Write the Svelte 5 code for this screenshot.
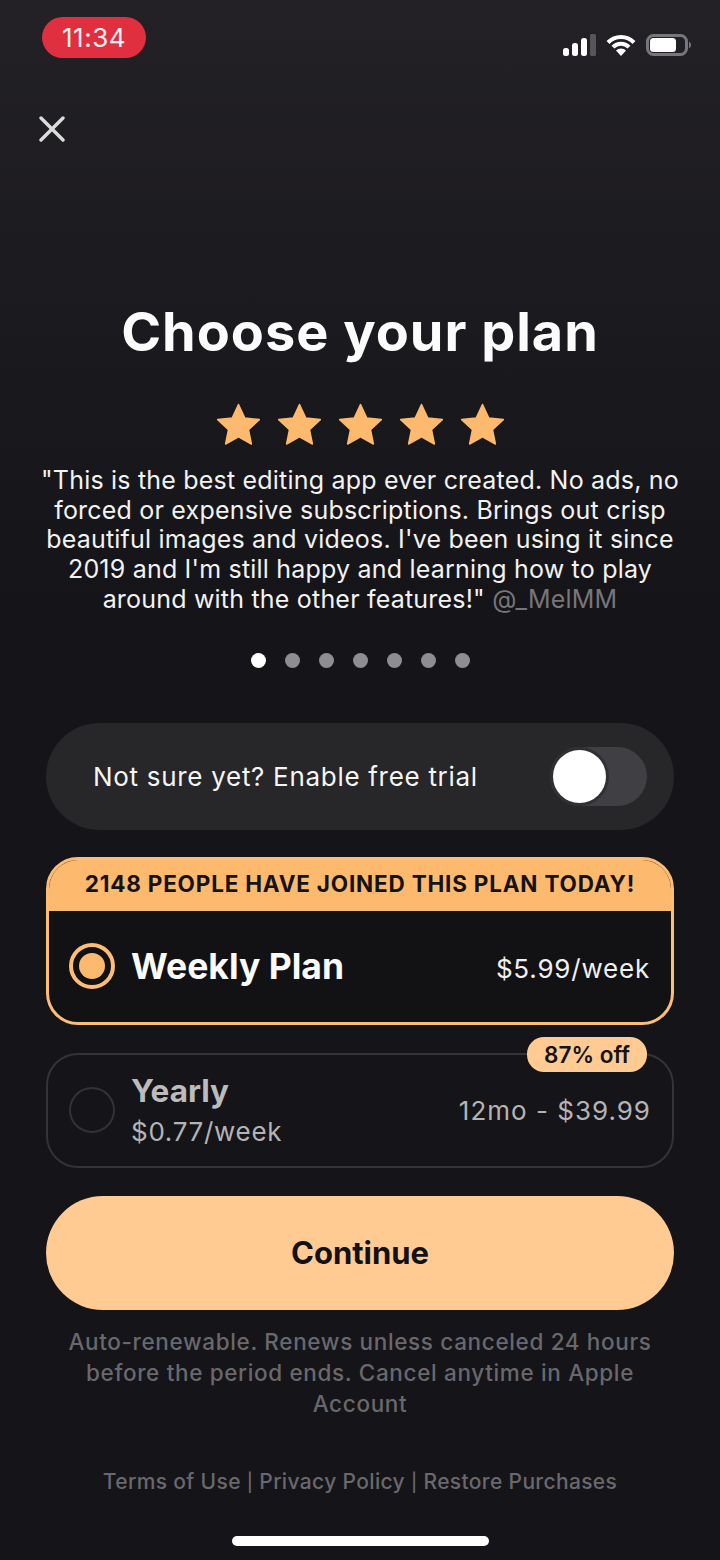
<script lang="ts">
const dots = [0, 1, 2, 3, 4, 5, 6];
const stars = [0, 1, 2, 3, 4];
</script>

<div class="screen">
  <div class="status">
    <span class="time">11:34</span>
    <div class="status-icons">
      <svg width="33" height="22" viewBox="0 0 33 22">
        <rect x="0" y="14" width="6" height="8" rx="2.5" fill="#fff" />
        <rect x="9" y="9" width="6" height="13" rx="2.5" fill="#fff" />
        <rect x="18" y="4" width="6" height="18" rx="2.5" fill="#fff" />
        <rect x="27" y="0" width="6" height="22" rx="1.5" fill="#56555a" />
      </svg>
      <svg width="30" height="22" viewBox="0 0 30 22">
        <path d="M2 8.5a18 18 0 0 1 26 0M7 13.2a11 11 0 0 1 16 0" fill="none" stroke="#fff" stroke-width="4" />
        <path d="M15 22l-5-5.5a7 7 0 0 1 10 0z" fill="#fff" />
      </svg>
      <svg width="47" height="22" viewBox="0 0 47 22">
        <rect x="1.5" y="1.5" width="39" height="19" rx="6" fill="none" stroke="#77767a" stroke-width="3" />
        <rect x="4" y="4" width="26" height="14" rx="3.5" fill="#fff" />
        <path d="M43 7.5a4 4 0 0 1 0 7z" fill="#77767a" />
      </svg>
    </div>
  </div>

  <svg class="close" width="26" height="26" viewBox="0 0 26 26">
    <path d="M2 2l22 22M24 2L2 24" stroke="#dcdcdc" stroke-width="3.4" stroke-linecap="round" />
  </svg>

  <h1>Choose your plan</h1>

  <div class="stars">
    {#each stars as s}
      <svg width="45" height="43" viewBox="0 0 45 43">
        <path d="M22.5 1.5l6.2 13.4 14.6 1.7-10.8 10 2.9 14.4-12.9-7.2-12.9 7.2 2.9-14.4-10.8-10 14.6-1.7z" fill="#fdba6f" stroke="#fdba6f" stroke-width="1.5" stroke-linejoin="round" />
      </svg>
    {/each}
  </div>

  <p class="quote">"This is the best editing app ever created. No ads, no forced or expensive subscriptions. Brings out crisp beautiful images and videos. I've been using it since 2019 and I'm still happy and learning how to play around with the other features!" <span class="handle">@_MelMM</span></p>

  <div class="dots">
    {#each dots as d}
      <span class="dot" class:active={d === 0}></span>
    {/each}
  </div>

  <div class="trial">
    <span>Not sure yet? Enable free trial</span>
    <div class="toggle"><div class="knob"></div></div>
  </div>

  <div class="plan selected">
    <div class="plan-banner">2148 PEOPLE HAVE JOINED THIS PLAN TODAY!</div>
    <div class="plan-row">
      <div class="radio on"><div class="radio-fill"></div></div>
      <span class="plan-name">Weekly Plan</span>
      <span class="plan-price">$5.99/week</span>
    </div>
  </div>

  <div class="plan other">
    <span class="badge">87% off</span>
    <div class="plan-row">
      <div class="radio"></div>
      <div class="plan-text">
        <span class="plan-name small">Yearly</span>
        <span class="plan-sub">$0.77/week</span>
      </div>
      <span class="plan-price dim">12mo - $39.99</span>
    </div>
  </div>

  <button class="continue">Continue</button>

  <p class="legal">Auto-renewable. Renews unless canceled 24 hours before the period ends. Cancel anytime in Apple Account</p>

  <p class="links">Terms of Use <span class="sep">|</span> Privacy Policy <span class="sep">|</span> Restore Purchases</p>

  <div class="home"></div>
</div>

<style>
  :global(body) {
    margin: 0;
    background: #151418;
  }

  .screen {
    width: 720px;
    height: 1560px;
    box-sizing: border-box;
    padding: 17px 46px 0;
    display: flex;
    flex-direction: column;
    overflow: hidden;
    background: linear-gradient(#232125 0, #1c1b1f 260px, #151418 600px, #151418 100%);
    font-family: Inter, "Liberation Sans", sans-serif;
    color: #fff;
  }

  .status {
    display: flex;
    justify-content: space-between;
    align-items: flex-start;
    margin: 0 -19px 0 -4px;
    height: 41px;
  }

  .time {
    width: 104px;
    height: 41px;
    border-radius: 21px;
    background: #e02f3f;
    color: #fdf0f0;
    font-size: 26px;
    font-weight: 400;
    line-height: 41px;
    text-align: center;
    letter-spacing: 0.5px;
  }

  .status-icons {
    display: flex;
    align-items: center;
    gap: 10px;
    margin-top: 17px;
  }

  .close {
    margin: 58px 0 0 -7px;
    flex: none;
  }

  h1 {
    margin: 160px 0 0;
    font-size: 54px;
    line-height: 60px;
    font-weight: 700;
    letter-spacing: 1px;
    text-align: center;
    color: #fbfbfb;
    white-space: nowrap;
  }

  .stars {
    display: flex;
    justify-content: center;
    gap: 16px;
    margin-top: 41px;
  }

  .quote {
    margin: 20px -10px 0;
    font-size: 25px;
    line-height: 29.7px;
    letter-spacing: 0.2px;
    text-align: center;
    color: #f2f2f2;
  }

  .handle {
    color: #77767a;
  }

  .dots {
    display: flex;
    justify-content: center;
    gap: 19px;
    margin-top: 38px;
  }

  .dot {
    width: 15px;
    height: 15px;
    border-radius: 50%;
    background: #8e8d90;
  }

  .dot.active {
    background: #fff;
  }

  .trial {
    display: flex;
    justify-content: space-between;
    align-items: center;
    height: 107px;
    margin-top: 55px;
    padding: 0 27px 0 47px;
    border-radius: 54px;
    background: #272629;
    font-size: 26px;
    letter-spacing: 0.7px;
    color: #f5f5f5;
  }

  .toggle {
    width: 97px;
    height: 59px;
    border-radius: 30px;
    background: #403f43;
    position: relative;
  }

  .knob {
    position: absolute;
    left: 3px;
    top: 3px;
    width: 53px;
    height: 53px;
    border-radius: 50%;
    background: #fff;
    box-shadow: 0 0 0 3px #302f33;
  }

  .plan {
    box-sizing: border-box;
    border-radius: 32px;
    position: relative;
  }

  .plan.selected {
    height: 168px;
    margin-top: 27px;
    border: 3px solid #fdbd76;
    background: #121114;
    overflow: hidden;
  }

  .plan-banner {
    height: 51px;
    background: #fdba6f;
    color: #141316;
    font-size: 22.5px;
    font-weight: 700;
    letter-spacing: 0.8px;
    line-height: 47px;
    text-align: center;
    white-space: nowrap;
  }

  .plan-row {
    display: flex;
    align-items: center;
    padding: 0 21px;
    height: 111px;
  }

  .plan.selected .plan-row {
    padding-left: 20px;
  }

  .radio {
    box-sizing: border-box;
    flex: none;
    width: 46px;
    height: 46px;
    border-radius: 50%;
    border: 2px solid #333236;
    margin-right: 16px;
  }

  .radio.on {
    border: 4px solid #fdbd76;
    display: flex;
    align-items: center;
    justify-content: center;
  }

  .radio-fill {
    width: 26px;
    height: 26px;
    border-radius: 50%;
    background: #fdba6f;
  }

  .plan-name {
    font-size: 35.5px;
    font-weight: 700;
    color: #fbfbfb;
  }

  .plan-name.small {
    font-size: 31.5px;
    line-height: 38px;
    color: #bcbcbe;
  }

  .plan-price {
    margin-left: auto;
    margin-top: 4px;
    font-size: 26px;
    letter-spacing: 0.8px;
    color: #f0f0f0;
  }

  .plan-price.dim {
    margin-top: 0;
    letter-spacing: 1px;
    color: #b4b4b6;
  }

  .plan.other {
    height: 115px;
    margin-top: 28px;
    border: 2px solid #343337;
  }

  .plan-text {
    display: flex;
    flex-direction: column;
    gap: 6px;
  }

  .plan-sub {
    font-size: 26px;
    line-height: 32px;
    letter-spacing: 0.7px;
    color: #b4b4b6;
  }

  .badge {
    position: absolute;
    right: 25px;
    top: -18px;
    width: 120px;
    height: 35px;
    border-radius: 17px;
    background: #ffcb92;
    color: #141316;
    font-size: 22.5px;
    font-weight: 600;
    line-height: 35px;
    text-align: center;
  }

  .continue {
    height: 114px;
    margin-top: 28px;
    border: none;
    border-radius: 57px;
    background: #ffcb92;
    color: #121114;
    font-family: inherit;
    font-size: 31px;
    font-weight: 700;
  }

  .legal {
    margin: 16px 0 0;
    font-size: 22.5px;
    font-weight: 500;
    line-height: 31px;
    letter-spacing: 0.65px;
    text-align: center;
    color: #69686c;
  }

  .links {
    margin: 49px 0 0;
    font-size: 21px;
    font-weight: 500;
    line-height: 28px;
    letter-spacing: 0.35px;
    text-align: center;
    color: #69686c;
    white-space: nowrap;
  }

  .sep {
    font-size: 18px;
  }

  .home {
    width: 257px;
    height: 10px;
    margin: 39px auto 0;
    border-radius: 5px;
    background: #fff;
    flex: none;
  }
</style>
